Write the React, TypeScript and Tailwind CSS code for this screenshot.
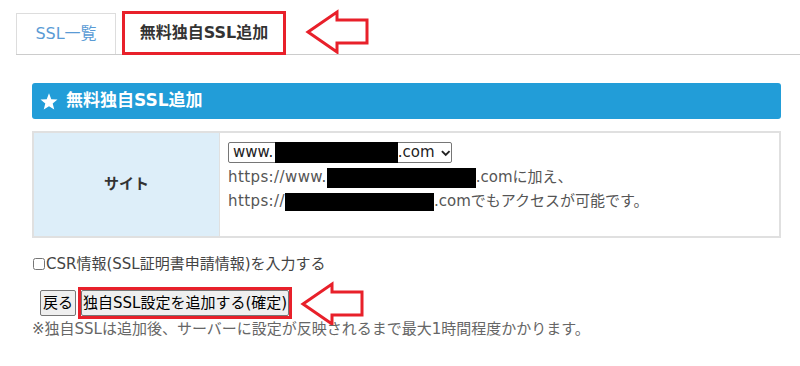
import React from 'react';

const FONT = { fontFamily: '"DejaVu Sans", "Noto Sans CJK JP", sans-serif' };

function RedArrow({ className }: { className?: string }) {
  // hollow red arrow pointing left (annotation)
  return (
    <svg width="72" height="46" viewBox="0 0 72 46" className={className}>
      <polygon
        points="8,24 37,4 37,12 67,12 67,35 37,35 37,44"
        fill="#fff"
        stroke="#e8202a"
        strokeWidth="3"
        strokeLinejoin="miter"
      />
    </svg>
  );
}

function Redact({ w, h = 20 }: { w: number; h?: number }) {
  return <span className="inline-block bg-black align-middle" style={{ width: w, height: h }} />;
}

export default function App() {
  return (
    <div className="w-[800px] h-[366px] bg-white overflow-hidden text-[15px]" style={FONT}>
      {/* Tabs */}
      <div className="ml-[16px] flex items-end pt-[11px] border-b border-[#cccccc]">
        <div className="h-[41px] w-[100px] flex items-center justify-center border border-b-0 border-[#dddddd] text-[16px] text-[#5a9bd5]">
          SSL一覧
        </div>
        <div className="ml-[6px] -mb-px h-[44px] w-[164px] flex items-center justify-center border-[3px] border-[#e8202a] bg-white text-[16px] font-bold text-[#333]">
          無料独自SSL追加
        </div>
        <RedArrow className="ml-[14px] self-start -mt-[3px]" />
      </div>

      <div className="ml-[32px] w-[749px]">
        {/* Section header */}
        <div className="mt-[28px] h-[36px] flex items-center gap-[8px] pl-[8px] rounded-[3px] bg-[#229dd8] text-white">
          <svg width="18" height="17" viewBox="0 0 24 23">
            <polygon
              points="12,0.5 15.1,8.3 23.5,8.8 17,14.1 19.1,22.3 12,17.8 4.9,22.3 7,14.1 0.5,8.8 8.9,8.3"
              fill="#fff"
            />
          </svg>
          <span className="text-[17px] font-bold">無料独自SSL追加</span>
        </div>

        {/* Table */}
        <div className="mt-[12px] h-[107px] flex border-2 border-[#e0e0e0]">
          <div className="w-[186px] flex items-center justify-center bg-[#ddeef9] border-r border-[#e0e0e0] font-bold text-[#333]">
            サイト
          </div>
          <div className="flex-1 pl-[8px] pt-[9px] text-[#555]">
            <div className="h-[21px] w-[224px] flex items-center border border-[#767676] rounded-[2px] bg-white pl-[4px] text-[#222]">
              <span>www.</span>
              <span className="w-[2px]" />
              <span className="-my-[1px] h-[21px] w-[128px] bg-black" />
              <span>.com</span>
              <svg width="12" height="12" viewBox="0 0 12 12" className="ml-[5px]">
                <path d="M2 4 L6 8 L10 4" fill="none" stroke="#222" strokeWidth="2" />
              </svg>
            </div>
            <div className="mt-[2px] leading-[24px]">
              <span className="tracking-[0.4px]">https://www.</span>
              <Redact w={149} />.comに加え、
            </div>
            <div className="leading-[24px]">
              <span className="tracking-[0.4px]">https://</span>
              <Redact w={149} h={18} />.comでもアクセスが可能です。
            </div>
          </div>
        </div>

        {/* Checkbox */}
        <label className="mt-[14px] flex items-center leading-[24px] text-[#444]">
          <input type="checkbox" className="m-0 ml-[1px] mr-[1px] w-[12px] h-[12px]" />
          CSR情報(SSL証明書申請情報)を入力する
        </label>

        {/* Buttons */}
        <div className="mt-[11px] ml-[8px] flex items-center h-[32px]">
          <button className="h-[26px] px-[2px] border border-[#767676] rounded-[2px] bg-[#efefef] text-[15px] text-black">
            戻る
          </button>
          <span className="ml-[2px] h-[32px] flex items-center border-[3px] border-[#e8202a]">
            <button className="h-[26px] px-[1px] border border-[#767676] rounded-[2px] bg-[#efefef] text-[15px] text-black whitespace-nowrap">
              独自SSL設定を追加する(確定)
            </button>
          </span>
          <RedArrow className="ml-[3px] -my-[8px]" />
        </div>

        <div className="leading-[20px] text-[15px] text-[#666] whitespace-nowrap">
          ※独自SSLは追加後、サーバーに設定が反映されるまで最大1時間程度かかります。
        </div>
      </div>
    </div>
  );
}
